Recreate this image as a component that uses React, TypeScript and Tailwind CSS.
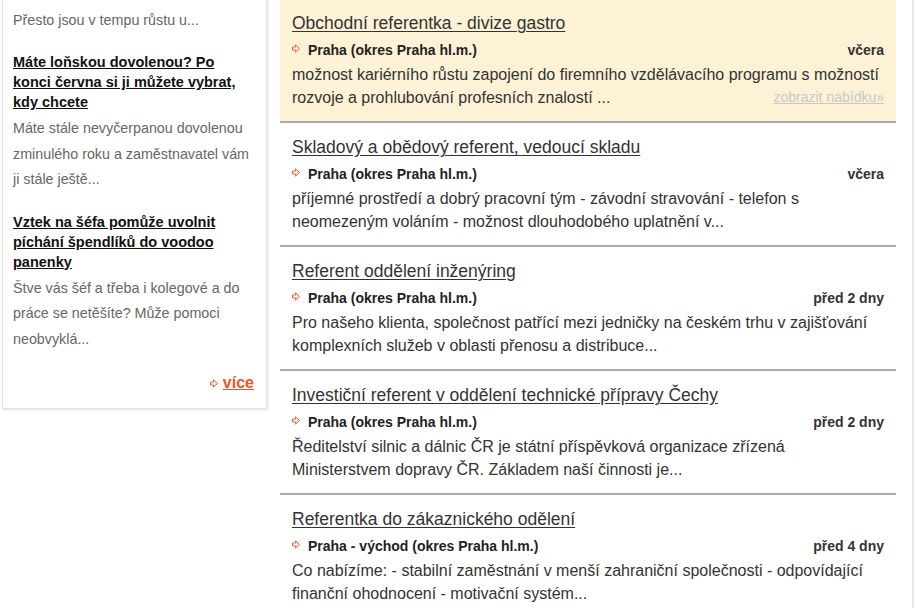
import React from 'react';

type Job = {
  title: string;
  place: string;
  date: string;
  text: string;
  highlight?: boolean;
};

const jobs: Job[] = [
  {
    title: 'Obchodní referentka - divize gastro',
    place: 'Praha (okres Praha hl.m.)',
    date: 'včera',
    text: 'možnost kariérního růstu zapojení do firemního vzdělávacího programu s možností rozvoje a prohlubování profesních znalostí ...',
    highlight: true,
  },
  {
    title: 'Skladový a obědový referent, vedoucí skladu',
    place: 'Praha (okres Praha hl.m.)',
    date: 'včera',
    text: 'příjemné prostředí a dobrý pracovní tým - závodní stravování - telefon s neomezeným voláním - možnost dlouhodobého uplatnění v...',
  },
  {
    title: 'Referent oddělení inženýring',
    place: 'Praha (okres Praha hl.m.)',
    date: 'před 2 dny',
    text: 'Pro našeho klienta, společnost patřící mezi jedničky na českém trhu v zajišťování komplexních služeb v oblasti přenosu a distribuce...',
  },
  {
    title: 'Investiční referent v oddělení technické přípravy Čechy',
    place: 'Praha (okres Praha hl.m.)',
    date: 'před 2 dny',
    text: 'Ředitelství silnic a dálnic ČR je státní příspěvková organizace zřízená Ministerstvem dopravy ČR. Základem naší činnosti je...',
  },
  {
    title: 'Referentka do zákaznického odělení',
    place: 'Praha - východ (okres Praha hl.m.)',
    date: 'před 4 dny',
    text: 'Co nabízíme: - stabilní zaměstnání v menší zahraniční společnosti - odpovídající finanční ohodnocení - motivační systém...',
  },
];

const articles = [
  {
    title: 'Máte loňskou dovolenou? Po konci června si ji můžete vybrat, kdy chcete',
    text: 'Máte stále nevyčerpanou dovolenou zminulého roku a zaměstnavatel vám ji stále ještě...',
  },
  {
    title: 'Vztek na šéfa pomůže uvolnit píchání špendlíků do voodoo panenky',
    text: 'Štve vás šéf a třeba i kolegové a do práce se netěšíte? Může pomoci neobvyklá...',
  },
];

function Arrow() {
  return (
    <svg width="8" height="9" viewBox="0 0 8 9" className="shrink-0">
      <polygon
        points="0.5,3 3.5,3 3.5,0.8 7.5,4.5 3.5,8.2 3.5,6 0.5,6"
        fill="#fde3d8"
        stroke="#ec6a4c"
        strokeWidth="1"
        strokeLinejoin="round"
      />
    </svg>
  );
}

export default function App() {
  return (
    <div className="flex w-[914px] h-[608px] overflow-hidden bg-white font-['Liberation_Sans',Arial,sans-serif]">
      {/* sidebar */}
      <div className="ml-[2px] -mt-[20px] self-start w-[265px] pt-[26px] pb-[15px] pl-[10px] pr-[12px] bg-white border border-[#e2e2e2] shadow-[1px_1px_3px_rgba(0,0,0,0.12)]">
        <p className="text-[14.3px] leading-[26px] text-[#666]">Přesto jsou v tempu růstu u...</p>
        {articles.map((a, i) => (
          <div key={i} className="mt-[19px]">
            <a href="#" className="block text-[14.5px] leading-[20px] font-bold text-[#111] underline">
              {a.title}
            </a>
            <p className="mt-[4px] text-[14.3px] leading-[25.5px] text-[#666]">{a.text}</p>
          </div>
        ))}
        <div className="mt-[21px] flex items-center justify-end gap-[5px]">
          <Arrow />
          <a href="#" className="text-[16px] leading-[20px] font-bold text-[#e8562a] underline">
            více
          </a>
        </div>
      </div>

      {/* job list */}
      <div className="ml-[13px] -mt-[1px] w-[616px] shrink-0">
        {jobs.map((j, i) => (
          <div
            key={i}
            className={`px-[12px] pt-[12px] pb-[12.5px] border-b-2 border-[#aaaaaa] ${j.highlight ? 'bg-[#fdf1d6]' : 'bg-white'}`}
          >
            <a href="#" className="block text-[17.5px] leading-[24px] text-[#333] underline underline-offset-2">
              {j.title}
            </a>
            <div className="mt-[5px] h-[20px] flex items-center justify-between">
              <div className="flex items-center gap-[8px]">
                <div className="-mt-[4px]">
                  <Arrow />
                </div>
                <span className="text-[14px] font-bold text-[#222]">{j.place}</span>
              </div>
              <span className="text-[14px] font-bold text-[#333]">{j.date}</span>
            </div>
            <p className="mt-[2.5px] text-[16px] leading-[23px] text-[#333]">
              {j.text}
              {j.highlight && (
                <a href="#" className="float-right text-[14px] text-[#c9c9c9] underline">
                  zobrazit nabídku»
                </a>
              )}
            </p>
          </div>
        ))}
      </div>

      <div className="ml-auto w-[2px] h-full bg-[#e6e6e6]" />
    </div>
  );
}
